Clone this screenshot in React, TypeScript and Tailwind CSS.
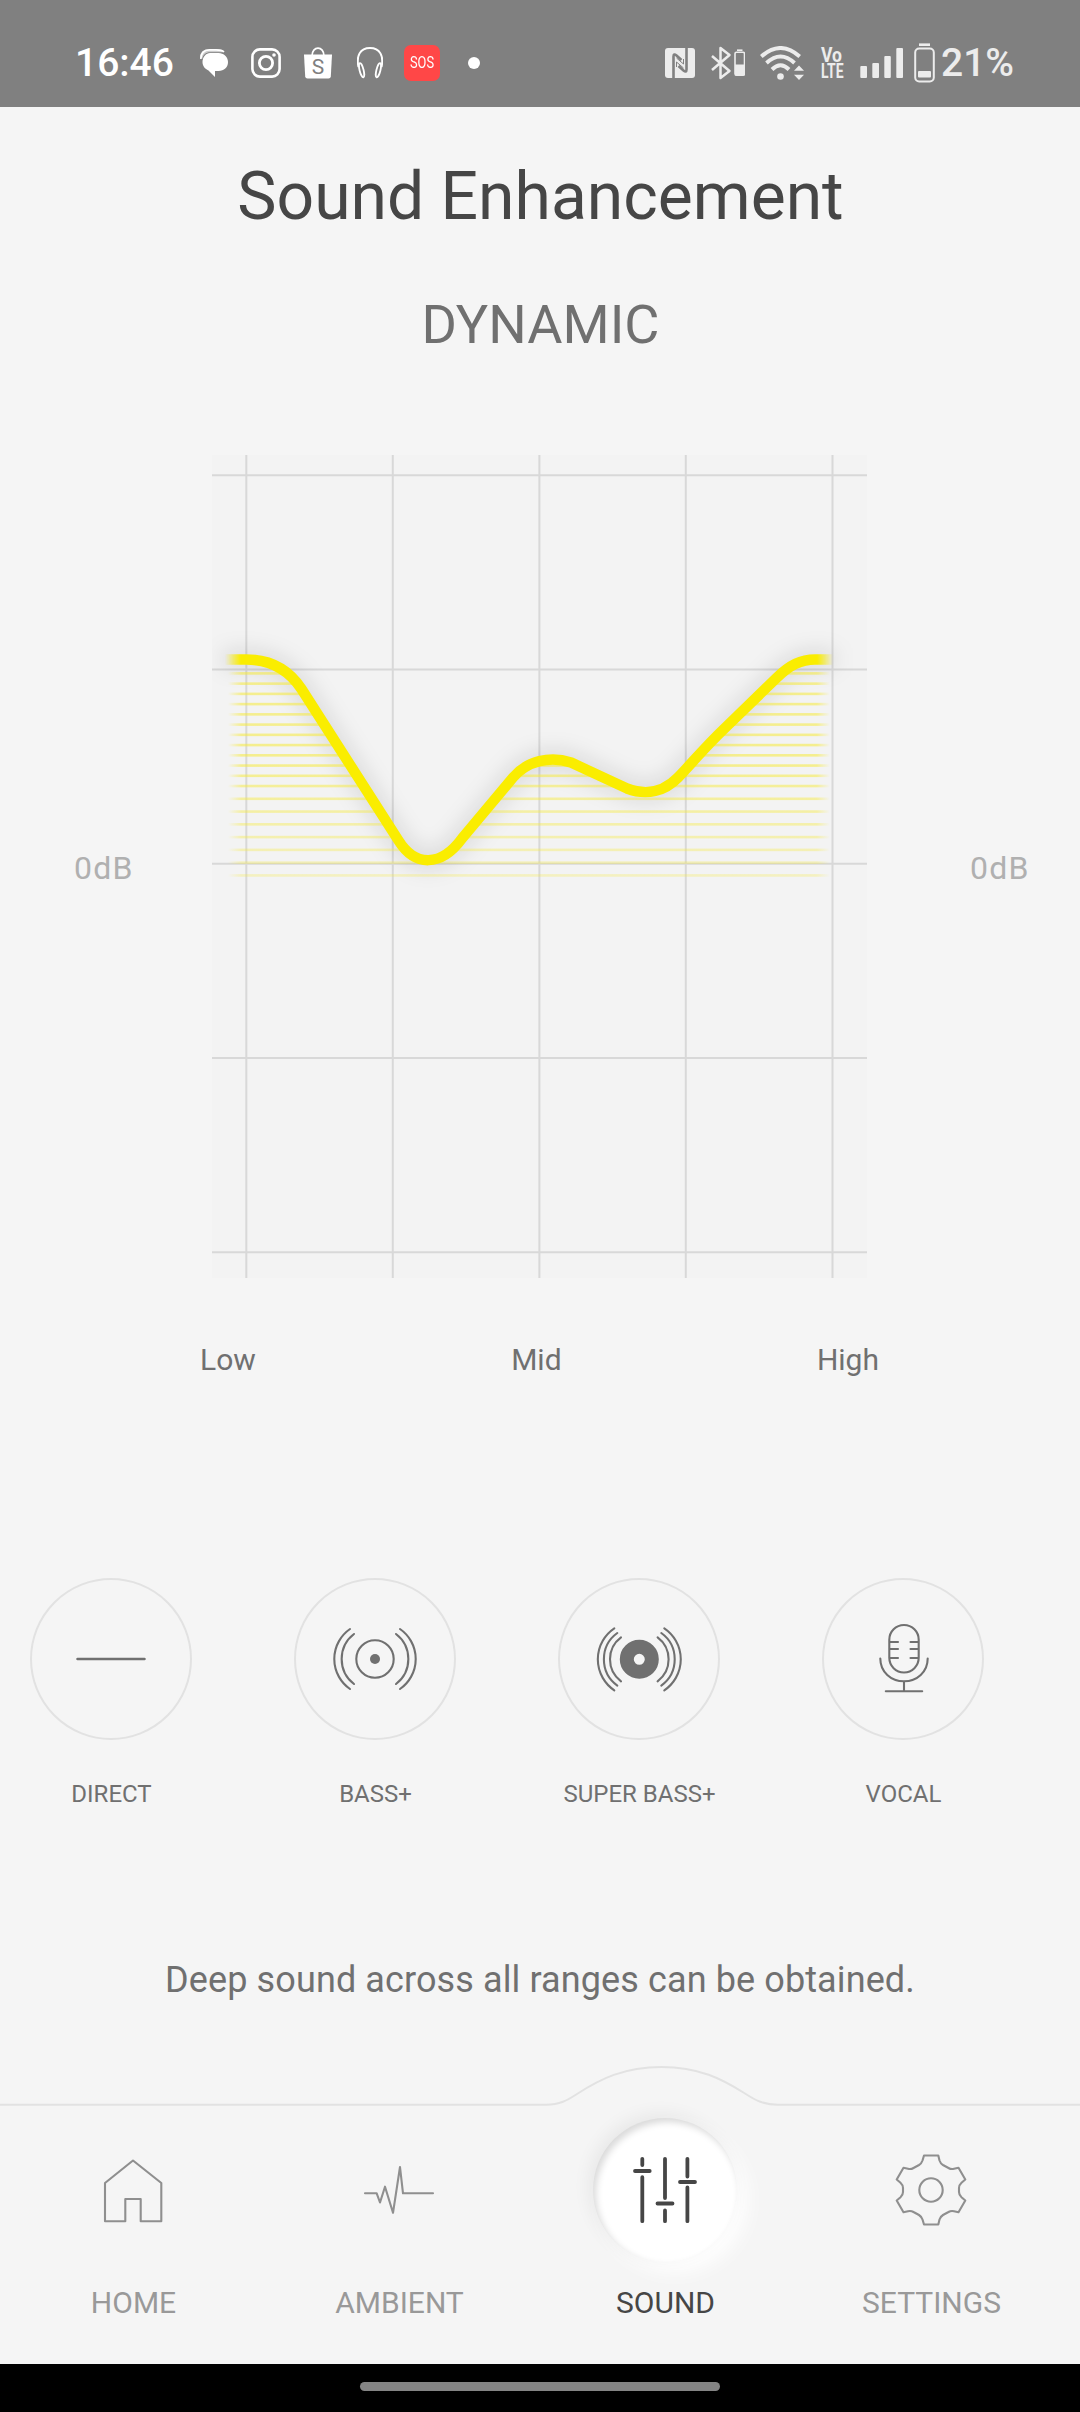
import React from "react";
import clsx from "clsx";

const CURVE =
  "M224 659.5 H246 C271 659.5 289 670 301.5 689 L398.5 840.5 C415 867 441 867 462 838.5 L513 777.5 C527 761 550 755.5 571 762.5 L627 788.5 C647 796 665 791 678 777.5 C692 763 704 748 726 727 L777 677.5 C790 665 801 659.5 815 659.5 H834";

const GRID_X = [246.3, 392.8, 539.4, 685.8, 832.5];
const GRID_Y = [475.3, 669.5, 863.8, 1058, 1252.3];

// upper stripes are a little tighter than the lower ones
const STRIPES = [
  ...Array.from({ length: 12 }, (_, i) => 673.4 + i * 10.24),
  ...Array.from({ length: 7 }, (_, i) => 798.8 + i * 12.77),
];

function StatusBar() {
  return (
    <header className="flex h-[107px] items-center bg-[#808080] pt-[18px] text-white">
      <span className="ml-[75px] w-[125px] text-[39px] leading-[46px] font-medium">
        16:46
      </span>
      {/* messages */}
      <svg className="h-[28px] w-[28px]" viewBox="0 0 28 28" fill="none">
        <path
          d="M10 4 H18.500 C24 4 28 8 28 13 C28 18.500 24 22 18.500 22 H15 V28 L8.500 21.500 C5 20 2.500 17 2.500 13 C2.500 8 6 4 10 4 Z"
          fill="#fff"
        />
        <path
          d="M.9 10 C.9 4 4 1 9.500 .9 H16 C20 .9 22.500 1.500 24 3"
          stroke="#fff"
          strokeWidth="1.700"
        />
        <path d="M2 11 C2 6 5 3.400 9.500 3.400 H18 C20.500 3.400 22.500 3.600 24.500 4.600" stroke="#808080" strokeWidth=".8" />
        <path d="M0 9 C0 3 4 0 9.500 0 H17 C20 0 22.500 1 24 3.200 H10 C6 3.200 3 5.500 2.200 10 Z" fill="#fff" opacity=".6" />
      </svg>
      {/* instagram */}
      <svg className="ml-[23px] size-[30px]" viewBox="0 0 30 30" fill="none" stroke="#fff">
        <rect x="1.4" y="1.4" width="27.2" height="27.2" rx="7.5" strokeWidth="2.6" />
        <circle cx="15" cy="15" r="6.6" strokeWidth="2.8" />
        <circle cx="23" cy="7" r="1.8" fill="#fff" stroke="none" />
      </svg>
      {/* shopping bag */}
      <svg className="ml-[23px] h-[32px] w-[28px]" viewBox="0 0 28 32" fill="none">
        <path d="M8 9 C8 -1.500 20 -1.500 20 9" stroke="#fff" strokeWidth="1.7" />
        <path d="M0 7.500 H28 L26.800 29.500 Q26.600 31.500 24.500 31.500 H3.500 Q1.400 31.500 1.200 29.500 Z" fill="#fff" />
        <text x="14" y="27" textAnchor="middle" className="font-['Roboto'] text-[21px]" fill="#808080">
          S
        </text>
      </svg>
      {/* headphones */}
      <svg className="ml-[25px] h-[32px] w-[26px]" viewBox="0 0 26 32" fill="none" stroke="#fff">
        <path d="M1.500 20 C-1 9 3 1 13 1 S27 9 24.500 20" strokeWidth="2" />
        <ellipse cx="4.600" cy="23.200" rx="2" ry="7.300" transform="rotate(-14 4.600 23.200)" strokeWidth="1.800" />
        <ellipse cx="21.400" cy="23.200" rx="2" ry="7.300" transform="rotate(14 21.400 23.200)" strokeWidth="1.800" />
      </svg>
      <span className="ml-[21px] flex size-[36px] items-center justify-center rounded-[7px] bg-[#ff4747] text-[16px]">
        <span className="scale-x-[.8]">SOS</span>
      </span>
      <i className="ml-[28px] size-[12px] rounded-full bg-white" />

      <div className="ml-[185px] flex items-center text-[#ececec]">
        {/* nfc */}
        <svg className="size-[30px]" viewBox="0 0 30 30" fill="none">
          <rect width="30" height="30" rx="3" fill="currentColor" />
          <path d="M8.500 30 V8.500 Q8.500 5 11.500 7.500 L16.500 12 M21.500 0 V21.500 Q21.500 25 18.500 22.500 L13.500 18" stroke="#808080" strokeWidth="2.600" />
          <path d="M11.500 19 V14 L18.500 20 M18.500 11 V16 L11.500 10" stroke="#808080" strokeWidth="1" />
        </svg>
        {/* bluetooth with device battery */}
        <svg className="ml-[16px] h-[34px] w-[34px]" viewBox="0 0 34 34" fill="none" stroke="currentColor">
          <path d="M1 10 L18.500 25 L9.500 32 V2 L18.500 9 L1 24" strokeWidth="2.500" strokeLinejoin="round" />
          <rect x="24" y="6.200" width="9.500" height="23" rx="1.500" strokeWidth="1.600" />
          <path d="M26 4.200 H31.500" strokeWidth="1.600" />
          <rect x="24" y="18.500" width="9.500" height="11" fill="currentColor" stroke="none" />
        </svg>
        {/* wifi */}
        <svg className="ml-[15px] h-[34px] w-[44px]" viewBox="0 0 44 34" fill="none" stroke="currentColor">
          <path d="M1.300 10.500 Q20.500 -6.500 39.700 10.500" strokeWidth="3.900" />
          <path d="M6.500 17 Q20.500 4 34.500 17" strokeWidth="3.900" />
          <path d="M12 23.500 Q20.500 15 29 23.500" strokeWidth="3.900" />
          <circle cx="20.500" cy="30.500" r="3.300" fill="currentColor" stroke="none" />
          <path d="M34 24.700 H44 L39 19.500 Z M34 28.700 H44 L39 34 Z" fill="currentColor" stroke="none" />
        </svg>
        {/* volte */}
        <svg className="ml-[17px] h-[30px] w-[22px] overflow-visible" viewBox="0 0 22 30" fill="currentColor">
          <text x="0" y="14" textLength="21" lengthAdjust="spacingAndGlyphs" className="font-['Roboto'] text-[19.500px] font-bold">
            Vo
          </text>
          <text x="0" y="30" textLength="22.500" lengthAdjust="spacingAndGlyphs" className="font-['Roboto'] text-[19.500px] font-bold">
            LTE
          </text>
        </svg>
        {/* signal */}
        <svg className="ml-[17px] h-[30px] w-[44px]" viewBox="0 0 44 30" fill="currentColor">
          <rect x=".3" y="18" width="6.700" height="12" rx="1" />
          <rect x="12.300" y="15" width="6.700" height="15" rx="1" />
          <rect x="24.300" y="8" width="6.500" height="22" rx="1" />
          <rect x="36.300" y="0" width="6.700" height="30" rx="1" />
        </svg>
        {/* battery */}
        <svg className="ml-[10px] h-[40px] w-[21px]" viewBox="0 0 21 40" fill="none">
          <path d="M5 1.700 H16" stroke="currentColor" strokeWidth="2.600" />
          <rect x="1.200" y="5.500" width="18.600" height="33" rx="4" stroke="currentColor" strokeWidth="2" />
          <rect x="4" y="28" width="13" height="6.500" rx="1" fill="currentColor" />
        </svg>
        <span className="ml-[6px] text-[39px] leading-[46px] font-medium">21%</span>
      </div>
    </header>
  );
}

function EqualizerChart() {
  return (
    <svg className="h-[823px] w-[655px] bg-[#f3f3f3]" viewBox="212 455 655 823" fill="none">
      <defs>
        <linearGradient id="fade" gradientUnits="userSpaceOnUse" x1="225" y1="0" x2="833" y2="0">
          <stop offset="0" stopColor="#fff" stopOpacity="0" />
          <stop offset=".026" stopColor="#fff" />
          <stop offset=".974" stopColor="#fff" />
          <stop offset="1" stopColor="#fff" stopOpacity="0" />
        </linearGradient>
        <linearGradient id="stripe" gradientUnits="userSpaceOnUse" x1="228" y1="0" x2="830" y2="0">
          <stop offset="0" stopColor="#f6ea3c" stopOpacity="0" />
          <stop offset=".022" stopColor="#f6ea3c" />
          <stop offset=".978" stopColor="#f6ea3c" />
          <stop offset="1" stopColor="#f6ea3c" stopOpacity="0" />
        </linearGradient>
        <mask id="edges" maskUnits="userSpaceOnUse" x="212" y="455" width="655" height="823">
          <rect x="212" y="455" width="655" height="823" fill="url(#fade)" />
        </mask>
        <clipPath id="under">
          <path d={`${CURVE} V900 H224 Z`} />
        </clipPath>
        <filter id="soft" filterUnits="userSpaceOnUse" x="160" y="600" width="760" height="340">
          <feGaussianBlur stdDeviation="11" />
        </filter>
      </defs>
      {GRID_X.map((x) => (
        <line key={x} x1={x} x2={x} y1="455" y2="1278" stroke="#d8d8d8" strokeWidth="2" />
      ))}
      {GRID_Y.map((y) => (
        <line key={y} x1="212" x2="867" y1={y} y2={y} stroke="#d8d8d8" strokeWidth="2" />
      ))}
      <path d={CURVE} stroke="#000" strokeOpacity=".17" strokeWidth="12" filter="url(#soft)" />
      <g clipPath="url(#under)">
        {STRIPES.map((y, i) => (
          <rect
            key={y}
            x="228"
            y={y - 1.3}
            width="602"
            height="2.6"
            fill="url(#stripe)"
            opacity={i < 10 ? 0.55 : 0.55 - (i - 9) * 0.03}
          />
        ))}
      </g>
      <path d={CURVE} stroke="#faed00" strokeWidth="10.500" mask="url(#edges)" />
    </svg>
  );
}

const presets = [
  {
    label: "DIRECT",
    icon: <path d="M-33.500 0 H33.500" strokeWidth="2.500" />,
  },
  {
    label: "BASS+",
    icon: (
      <>
        <circle r="18.700" />
        <circle r="5" fill="currentColor" stroke="none" />
        <path d="M-25 -30 A36.500 36.500 0 0 0 -25 30 M-21 -25 A31.500 31.500 0 0 0 -21 25" />
        <path d="M25 -30 A36.500 36.500 0 0 1 25 30 M21 -25 A31.500 31.500 0 0 1 21 25" />
      </>
    ),
  },
  {
    label: "SUPER BASS+",
    icon: (
      <g transform="translate(.3 .3)">
        <circle r="12.500" strokeWidth="14" />
        <path d="M-25 -31 A37.400 37.400 0 0 0 -25 31 M-22 -26.300 A32.500 32.500 0 0 0 -22 26.300 M-18.300 -22 A27.500 27.500 0 0 0 -18.300 22" />
        <path d="M25 -31 A37.400 37.400 0 0 1 25 31 M22 -26.300 A32.500 32.500 0 0 1 22 26.300 M18.300 -22 A27.500 27.500 0 0 1 18.300 22" />
      </g>
    ),
  },
  {
    label: "VOCAL",
    icon: (
      <g transform="translate(1 0)">
        <rect x="-14.700" y="-34" width="29.400" height="47.500" rx="14.700" />
        <path d="M-14 -17 H-6 M-14 -10 H-6 M-14 -1 H-6 M6.500 -17 H14 M6.500 -10 H14 M6.500 -1 H14" />
        <path d="M-23.700 -.5 C-23.700 13 -13 22.300 0 22.300 S23.700 13 23.700 -.5 M0 22.300 V32.300 M-18.200 32.300 H18.200" />
      </g>
    ),
  },
];

const tabs = [
  {
    label: "HOME",
    icon: <path d="M0 -29.500 L28.300 -7 V31.300 H7.700 V9 H-7.700 V31.300 H-28 V-7 Z" />,
  },
  {
    label: "AMBIENT",
    icon: <path d="M-34 3.300 H-22.300 L-19 12.500 L-14 -3.300 L-6 22.800 L1 -23 L4 3.300 H34" />,
  },
  {
    label: "SOUND",
    active: true,
    icon: (
      <g strokeWidth="3.800">
        <path d="M-22.700 -31.200 V-25 M-22.700 -12.800 V31.200 M-30 -19 H-15.300" />
        <path d="M0 -31.200 V8 M0 20.500 V31.200 M-7.500 13.500 H7.500" />
        <path d="M22.400 -31.200 V-13.500 M22.400 -2.500 V31.200 M15 -8 H30" />
      </g>
    ),
  },
  {
    label: "SETTINGS",
    icon: (
      <>
        <circle r="11.700" />
        <path d="M-7 -34.500 H7.300 L8.500 -29.500 Q9.500 -26.500 12 -25 L17.500 -22 Q20 -20.500 23 -21.200 L27.500 -22.300 L34.300 -10.500 L30.500 -7.300 Q28 -5 28 -2 V2 Q28 5 30.500 7.300 L34.300 10.500 L27.500 22.300 L23 21.200 Q20 20.500 17.500 22 L12 25 Q9.500 26.500 8.500 29.500 L7.300 34.500 H-7 L-8.500 29.500 Q-9.500 26.500 -12 25 L-17.500 22 Q-20 20.500 -23 21.200 L-27.500 22.300 L-34.300 10.500 L-30.500 7.300 Q-28 5 -28 2 V-2 Q-28 -5 -30.500 -7.300 L-34.300 -10.500 L-27.500 -22.300 L-23 -21.200 Q-20 -20.500 -17.500 -22 L-12 -25 Q-9.500 -26.500 -8.500 -29.500 Z" />
      </>
    ),
  },
];

export default function App() {
  return (
    <div className="flex h-[2412px] w-[1080px] flex-col overflow-hidden bg-[#f5f5f5] font-['Roboto',sans-serif] text-[#707070]">
      <StatusBar />

      <h1 className="mt-[51px] pl-px text-center text-[66px] leading-[78px] text-[#464646]">
        Sound Enhancement
      </h1>
      <h2 className="mt-[57px] pl-px text-center text-[54px] leading-[64px]">DYNAMIC</h2>

      <div className="mt-[98px] flex items-center">
        <span className="w-[212px] pt-[2px] pl-[74px] text-[32px] leading-[36px] tracking-[1.2px] text-[#b0b0b0]">
          0dB
        </span>
        <EqualizerChart />
        <span className="pt-[2px] pl-[103px] text-[32px] leading-[36px] tracking-[1.2px] text-[#b0b0b0]">
          0dB
        </span>
      </div>
      <div className="mt-[64px] mr-[201px] ml-[200px] flex justify-between text-[30px] leading-[36px]">
        <span>Low</span>
        <span>Mid</span>
        <span>High</span>
      </div>

      <div className="mt-[200px] ml-[-21px] flex">
        {presets.map((preset) => (
          <button key={preset.label} className="flex w-[264px] shrink-0 flex-col items-center">
            <span className="flex size-[162px] items-center justify-center rounded-full border-2 border-[#e2e2e2]">
              <svg
                className="size-[100px]"
                viewBox="-50 -50 100 100"
                fill="none"
                stroke="currentColor"
                strokeWidth="2.100"
                strokeLinecap="round"
              >
                {preset.icon}
              </svg>
            </span>
            <span className="mt-[40px] pl-px text-[24px] leading-[28px] whitespace-nowrap">{preset.label}</span>
          </button>
        ))}
      </div>

      <p className="mt-[151px] text-center text-[36px] leading-[42px] tracking-[0.11px]">
        Deep sound across all ranges can be obtained.
      </p>

      <nav className="mt-[64px] h-[299px]">
        <svg className="h-[42px] w-full" viewBox="0 2065 1080 42" fill="none">
          <path
            d="M0 2104.700 H546 C560 2104.700 567 2100.500 577 2094 C600 2079 624 2067 661.500 2067 C699 2067 722 2079 745 2093.500 C755 2100 763 2104.700 778 2104.700 H1080"
            stroke="#e2e2e2"
            strokeWidth="2"
          />
        </svg>
        <div className="mt-[11px] flex">
          {tabs.map((tab) => (
            <button
              key={tab.label}
              className={clsx(
                "flex w-[266px] flex-col items-center",
                tab.active ? "text-[#464646]" : "text-[#999999]"
              )}
            >
              <span
                className={clsx(
                  "flex size-[144px] items-center justify-center rounded-full",
                  tab.active &&
                    "bg-white shadow-[-4px_-4px_18px_rgba(0,0,0,0.06),10px_10px_20px_#ffffff,inset_3px_4px_7px_rgba(0,0,0,0.15)]"
                )}
              >
                <svg
                  className="size-[80px]"
                  viewBox="-40 -40 80 80"
                  fill="none"
                  stroke={tab.active ? "#464646" : "#8f8f8f"}
                  strokeWidth="2.100"
                  strokeLinecap="round"
                  strokeLinejoin="round"
                >
                  {tab.icon}
                </svg>
              </span>
              <span className="mt-[23px] pl-px text-[30px] leading-[36px]">{tab.label}</span>
            </button>
          ))}
        </div>
      </nav>

      <footer className="flex h-[48px] justify-center bg-black pt-[18px]">
        <div className="h-[9px] w-[360px] rounded-full bg-[#848484]" />
      </footer>
    </div>
  );
}
